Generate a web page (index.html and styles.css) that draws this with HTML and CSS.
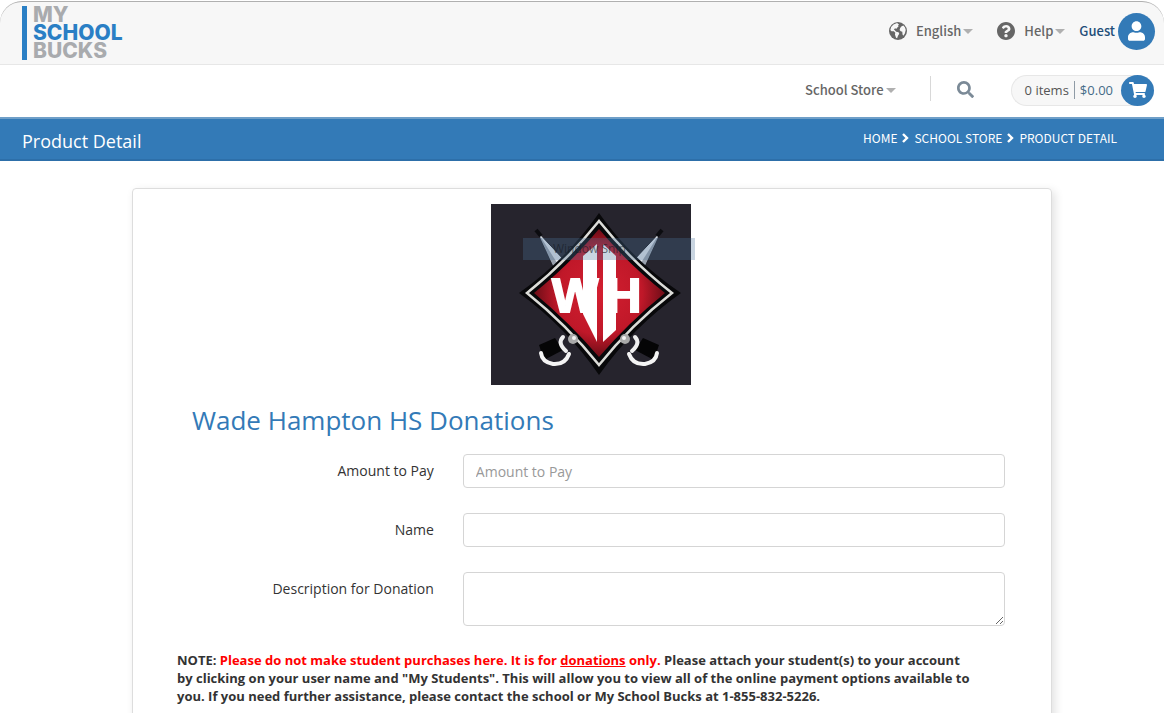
FILE: index.html
```html
<!DOCTYPE html>
<html lang="en">

<head>
    <meta charset="UTF-8">
    <meta name="viewport" content="width=device-width, initial-scale=1.0">
    <title>Product Detail</title>
    <link rel="stylesheet" href="styles.css">
</head>

<body>
    <header class="top-bar">
        <a class="logo" href="#">
            <span class="logo-gray">MY</span>
            <span class="logo-blue">SCHOOL</span>
            <span class="logo-gray">BUCKS</span>
        </a>
        <nav class="top-links">
            <a class="menu-link" href="#">
                <svg class="menu-icon" viewBox="0 0 20 20">
                    <circle cx="10" cy="10" r="10" fill="#666" />
                    <path d="M9 1.2 L5 2.8 L2.4 5.5 L1.5 9 L2.8 10.2 L5.4 10.2 L7 12 L6.6 14 L7.8 17.5 L9 18 L10 15.2 L11.4 13 L10.6 11.4 L8 10.8 L6.2 9 L5.4 8 L7 7 L8 7.8 L9 6.3 L10.6 5 L10 4 L11.2 3 Z" fill="#f7f7f7" />
                    <path d="M14 4.6 L12.4 6.6 L11.8 8.8 L13 10.4 L14.8 10.8 L15 13.8 L16 15.2 L17.6 12.8 L18.6 9 L17.8 6 L16 4 Z" fill="#f7f7f7" />
                </svg>
                <span>English</span>
                <span class="caret"></span>
            </a>
            <a class="menu-link" href="#">
                <svg class="menu-icon" viewBox="8 8 496 496">
                    <path fill="#666" d="M504 256c0 136.997-111.043 248-248 248S8 392.997 8 256C8 119.083 119.043 8 256 8s248 111.083 248 248zM262.655 90c-54.497 0-89.255 22.957-116.549 63.758-3.536 5.286-2.353 12.415 2.715 16.258l34.699 26.31c5.205 3.947 12.621 3.008 16.665-2.122 17.864-22.658 30.113-35.797 57.303-35.797 20.429 0 45.698 13.148 45.698 32.958 0 14.976-12.363 22.667-32.534 33.976C247.128 238.528 216 254.941 216 296v4c0 6.627 5.373 12 12 12h56c6.627 0 12-5.373 12-12v-1.333c0-28.462 83.186-29.647 83.186-106.667 0-58.002-60.165-102-116.531-102zM256 338c-25.365 0-46 20.635-46 46 0 25.364 20.635 46 46 46s46-20.636 46-46c0-25.365-20.635-46-46-46z" />
                </svg>
                <span>Help</span>
                <span class="caret"></span>
            </a>
            <a class="user-link" href="#">
                <span>Guest</span>
                <span class="user-circle">
                    <svg width="17" height="20" viewBox="0 0 448 512">
                        <path fill="#fff" d="M224 256c70.7 0 128-57.3 128-128S294.7 0 224 0 96 57.3 96 128s57.3 128 128 128zm89.6 32h-16.7c-22.2 10.2-46.9 16-72.9 16s-50.6-5.8-72.9-16h-16.7C60.2 288 0 348.2 0 422.4V464c0 26.5 21.5 48 48 48h352c26.5 0 48-21.5 48-48v-41.6c0-74.2-60.2-134.4-134.4-134.4z" />
                    </svg>
                </span>
            </a>
        </nav>
    </header>

    <nav class="store-bar">
        <a class="menu-link" href="#">
            <span>School Store</span>
            <span class="caret"></span>
        </a>
        <span class="divider"></span>
        <button class="search-btn" type="button" aria-label="Search">
            <svg width="17" height="17" viewBox="0 0 512 512">
                <path fill="#7b8a97" d="M505 442.7L405.3 343c-4.5-4.5-10.6-7-17-7H372c27.6-35.3 44-79.7 44-128C416 93.1 322.9 0 208 0S0 93.1 0 208s93.1 208 208 208c48.3 0 92.7-16.4 128-44v16.3c0 6.4 2.5 12.5 7 17l99.7 99.7c9.4 9.4 24.6 9.4 33.9 0l28.3-28.3c9.4-9.4 9.4-24.6.1-34zM208 336c-70.7 0-128-57.2-128-128 0-70.7 57.2-128 128-128 70.7 0 128 57.2 128 128 0 70.7-57.2 128-128 128z" />
            </svg>
        </button>
        <a class="cart" href="#">
            <span>0 items</span>
            <span class="cart-total">$0.00</span>
            <span class="cart-circle">
                <svg width="18" height="16" viewBox="0 0 576 512">
                    <path fill="#fff" d="M528.12 301.319l47.273-208C578.806 78.301 567.391 64 551.99 64H159.208l-9.166-44.81C147.758 8.021 137.93 0 126.529 0H24C10.745 0 0 10.745 0 24v16c0 13.255 10.745 24 24 24h69.883l70.248 343.435C147.325 417.1 136 435.222 136 456c0 30.928 25.072 56 56 56s56-25.072 56-56c0-15.674-6.447-29.835-16.824-40h209.647C430.447 426.165 424 440.326 424 456c0 30.928 25.072 56 56 56s56-25.072 56-56c0-22.172-12.888-41.332-31.579-50.405l5.517-24.276c3.413-15.018-8.002-29.319-23.403-29.319H218.117l-6.545-32h293.145c11.206 0 20.92-7.754 23.403-18.681z" />
                </svg>
            </span>
        </a>
    </nav>

    <div class="title-bar">
        <h1>Product Detail</h1>
        <nav class="breadcrumbs">
            <a href="#">HOME</a>
            <svg width="7" height="10" viewBox="0 0 7 10"><path d="M1 1 L5 5 L1 9" fill="none" stroke="#fff" stroke-width="2.4" /></svg>
            <a href="#">SCHOOL STORE</a>
            <svg width="7" height="10" viewBox="0 0 7 10"><path d="M1 1 L5 5 L1 9" fill="none" stroke="#fff" stroke-width="2.4" /></svg>
            <a href="#">PRODUCT DETAIL</a>
        </nav>
    </div>

    <main class="content">
        <div class="card">
            <div class="product-image">
                <svg width="200" height="181" viewBox="0 0 200 181">
                    <defs>
                        <radialGradient id="red">
                            <stop offset="0" stop-color="#d31f30" />
                            <stop offset="0.65" stop-color="#c01829" />
                            <stop offset="1" stop-color="#6d0d17" />
                        </radialGradient>
                        <!-- blade and hilt, mirrored for the other side -->
                        <g id="blade">
                            <path d="M46 27 L74 57 L64 66 Z" fill="#dfe3ea" stroke="#14141a" stroke-width="1" />
                            <path d="M46 27 L68 62 L64 66 Z" fill="#9aa1ad" />
                            <path d="M45 26 L50 32" stroke="#0c0c10" stroke-width="4" />
                        </g>
                        <g id="hilt">
                            <path d="M144 146 L152 134 L168 141 L163 156 Z" fill="#050506" />
                            <path d="M144 133 Q150 139 141 147" fill="none" stroke="#efefef" stroke-width="4" stroke-linecap="round" />
                            <path d="M138 150 Q142 161 154 160 Q165 158 166 149" fill="none" stroke="#f4f4f4" stroke-width="4" stroke-linecap="round" />
                            <circle cx="134" cy="135" r="5" fill="#a9a9a9" />
                            <circle cx="133" cy="134" r="2" fill="#f3f3f3" />
                        </g>
                    </defs>
                    <rect width="200" height="181" fill="#26242d" />
                    <use href="#blade" />
                    <use href="#blade" transform="matrix(-1 0 0 1 216 0)" />
                    <path d="M108 9 Q141 56 190 89 Q142 123 108 171 Q75 123 28 89 Q75 56 108 9 Z" fill="#08080a" />
                    <path d="M108 17 Q140 57 181 89 Q140 121 108 161 Q76 121 36 89 Q76 57 108 17 Z" fill="#08080a" stroke="#dcdcd8" stroke-width="2.5" />
                    <path d="M108 25 Q138 61 174 89 Q138 118 108 153 Q78 118 43 89 Q78 61 108 25 Z" fill="url(#red)" />
                    <use href="#hilt" />
                    <use href="#hilt" transform="matrix(-1 0 0 1 216 0)" />
                    <path d="M92 52 L106 40 L106 138 L92 110 Z" fill="#fff" />
                    <path d="M112 40 L125 52 L125 126 L112 138 Z" fill="#fff" />
                    <text class="emblem-text" x="61" y="108">W</text>
                    <text class="emblem-text" x="115" y="108">H</text>
                </svg>
                <span class="snip-label">Window Snip</span>
            </div>

            <h2>Wade Hampton HS Donations</h2>

            <form class="donation-form">
                <label for="amount">Amount to Pay</label>
                <input type="text" id="amount" placeholder="Amount to Pay">
                <label for="name">Name</label>
                <input type="text" id="name">
                <label for="description">Description for Donation</label>
                <textarea id="description"></textarea>
            </form>

            <p class="note">NOTE: <span class="warning">Please do not make student purchases here. It is for <u>donations</u> only.</span> Please attach your student(s) to your account by clicking on your user name and "My Students". This will allow you to view all of the online payment options available to you. If you need further assistance, please contact the school or My School Bucks at 1-855-832-5226.</p>
        </div>
    </main>
</body>

</html>
```
FILE: styles.css
```css
* {
    box-sizing: border-box;
}

body {
    font-family: "Open Sans", sans-serif;
    font-size: 14px;
    color: #333;
    background-color: #fff;
    margin: 0;
}

a {
    color: inherit;
    text-decoration: none;
}

.top-bar {
    display: flex;
    justify-content: space-between;
    align-items: center;
    height: 64px;
    margin-top: 1px;
    padding: 0 9px 4px 22px;
    background-color: #f7f7f7;
    border-top: 1px solid #b0b0b0;
    border-bottom: 1px solid #e7e7e7;
    border-radius: 22px 22px 0 0;
}

.logo {
    display: flex;
    flex-direction: column;
    margin-top: 4px;
    padding-left: 6px;
    border-left: 5px solid #2a7fc5;
    font-family: Inter, sans-serif;
    font-size: 21px;
    font-weight: 800;
    line-height: 18px;
}

.logo-gray {
    color: #a9abae;
}

.logo-blue {
    color: #2a7fc5;
}

.top-links {
    display: flex;
    align-items: center;
    gap: 24px;
}

.menu-link,
.user-link {
    display: flex;
    align-items: center;
    font-family: "Noto Sans CJK SC", sans-serif;
    font-size: 13px;
    font-weight: 500;
    line-height: 20px;
    color: #666;
}

.menu-icon {
    width: 18px;
    height: 18px;
    margin-right: 9px;
}

.caret {
    border: 5px solid transparent;
    border-top-color: #b0b0b0;
    border-bottom: 0;
    margin-left: 2px;
}

.user-link {
    gap: 3px;
    margin-left: -10px;
    color: #1f4e79;
}

.user-circle,
.cart-circle {
    display: flex;
    justify-content: center;
    align-items: center;
    border-radius: 50%;
    background-color: #337ab7;
}

.user-circle {
    width: 37px;
    height: 37px;
}

.store-bar {
    display: flex;
    justify-content: flex-end;
    align-items: center;
    height: 52px;
    padding: 0 10px 2px 0;
}

.divider {
    width: 1px;
    height: 25px;
    margin: 0 26px 4px 34px;
    background-color: #d8d8d8;
}

.search-btn {
    display: flex;
    margin-right: 37px;
    padding: 0 0 2px;
    border: none;
    background: none;
    cursor: pointer;
}

.cart {
    display: flex;
    align-items: center;
    height: 31px;
    padding-left: 13px;
    border: 1px solid #e7e7e7;
    border-right: none;
    border-radius: 16px;
    background-color: #f7f7f7;
    font-size: 13px;
    color: #555;
}

.cart-total {
    margin-left: 5px;
    padding: 0 8px 0 5px;
    border-left: 1px solid #8f9ba6;
    color: #456b87;
}

.cart-circle {
    width: 33px;
    height: 31px;
}

.title-bar {
    display: flex;
    justify-content: space-between;
    align-items: center;
    height: 44px;
    padding: 0 47px 0 22px;
    background-color: #337ab7;
    border-top: 2px solid #6f9fc8;
    border-bottom: 2px solid #2d6fa9;
    color: #fff;
}

.title-bar h1 {
    margin: 4px 0 0;
    font-size: 18px;
    font-weight: 400;
}

.breadcrumbs {
    display: flex;
    align-items: center;
    gap: 5px;
    padding-bottom: 2px;
    font-family: "Noto Sans CJK SC", sans-serif;
    font-size: 12px;
    line-height: 18px;
}

.content {
    padding: 27px 112px 0 132px;
}

.card {
    padding: 15px 46px 40px 44px;
    border: 1px solid #ddd;
    border-radius: 4px;
    box-shadow: 3px 3px 10px rgba(0, 0, 0, 0.12);
}

.product-image {
    position: relative;
    width: 200px;
    margin: 0 auto;
}

.product-image svg {
    display: block;
}

.emblem-text {
    font-family: "Liberation Sans", sans-serif;
    font-size: 49px;
    font-weight: 700;
    fill: #fff;
    stroke: #fff;
    stroke-width: 2;
}

.snip-label {
    position: absolute;
    top: 34px;
    left: 32px;
    width: 172px;
    height: 22px;
    padding-left: 30px;
    background-color: rgba(75, 115, 155, 0.3);
    color: rgba(20, 25, 35, 0.6);
    font-size: 12px;
    line-height: 22px;
}

.card h2 {
    margin: 17px 0 16px 15px;
    font-size: 26px;
    font-weight: 400;
    line-height: 36px;
    color: #337ab7;
}

.donation-form {
    display: grid;
    grid-template-columns: 9fr 19fr;
    gap: 25px 29px;
}

.donation-form label {
    padding-top: 7px;
    line-height: 20px;
    text-align: right;
}

.donation-form input,
.donation-form textarea {
    width: 100%;
    height: 34px;
    padding: 6px 12px;
    border: 1px solid #d5d5d5;
    border-radius: 4px;
    background-color: #fff;
    font-family: inherit;
    font-size: 14px;
    color: #555;
}

.donation-form textarea {
    display: block;
    height: 54px;
}

.donation-form input::placeholder {
    color: #999;
}

.note {
    margin: 25px 0 0;
    padding-right: 30px;
    font-size: 13px;
    font-weight: 700;
    line-height: 18px;
}

.warning {
    color: #f00;
}
```
